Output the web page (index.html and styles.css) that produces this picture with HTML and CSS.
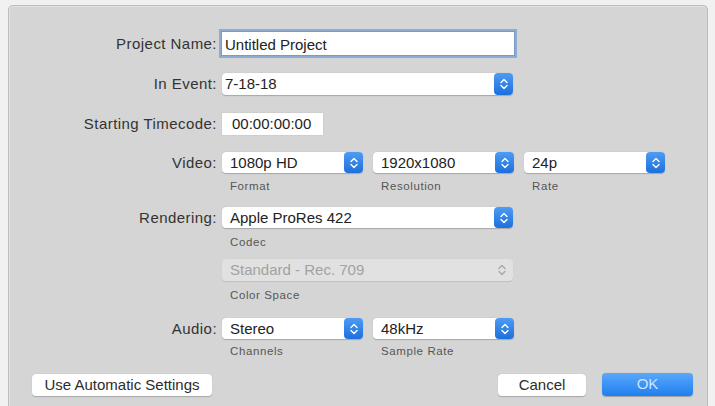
FILE: index.html
```html
<!DOCTYPE html>
<html>
<head>
<meta charset="utf-8">
<title>New Project</title>
<link rel="stylesheet" href="styles.css">
</head>
<body>
<div class="panel">
  <div class="row r-name">
    <div class="lbl">Project Name:</div>
    <div class="field field-name">Untitled Project</div>
  </div>

  <div class="row r-event">
    <div class="lbl">In Event:</div>
    <div class="popup w-full combo">
      <span class="val">7-18-18</span>
      <span class="step"><svg width="8" height="12" viewBox="0 0 8 12"><path d="M1 4.5L4 1.5L7 4.5M1 7.5L4 10.5L7 7.5" fill="none" stroke="#fff" stroke-width="1.4" stroke-linecap="round" stroke-linejoin="round"/></svg></span>
    </div>
  </div>

  <div class="row r-tc">
    <div class="lbl">Starting Timecode:</div>
    <div class="field field-tc">00:00:00:00</div>
  </div>

  <div class="row r-video">
    <div class="lbl">Video:</div>
    <div class="controls">
      <div class="col">
        <div class="popup w-third">
          <span class="val">1080p HD</span>
          <span class="step"><svg width="8" height="12" viewBox="0 0 8 12"><path d="M1 4.5L4 1.5L7 4.5M1 7.5L4 10.5L7 7.5" fill="none" stroke="#fff" stroke-width="1.4" stroke-linecap="round" stroke-linejoin="round"/></svg></span>
        </div>
        <div class="sub">Format</div>
      </div>
      <div class="col">
        <div class="popup w-third">
          <span class="val">1920x1080</span>
          <span class="step"><svg width="8" height="12" viewBox="0 0 8 12"><path d="M1 4.5L4 1.5L7 4.5M1 7.5L4 10.5L7 7.5" fill="none" stroke="#fff" stroke-width="1.4" stroke-linecap="round" stroke-linejoin="round"/></svg></span>
        </div>
        <div class="sub">Resolution</div>
      </div>
      <div class="col">
        <div class="popup w-third">
          <span class="val">24p</span>
          <span class="step"><svg width="8" height="12" viewBox="0 0 8 12"><path d="M1 4.5L4 1.5L7 4.5M1 7.5L4 10.5L7 7.5" fill="none" stroke="#fff" stroke-width="1.4" stroke-linecap="round" stroke-linejoin="round"/></svg></span>
        </div>
        <div class="sub">Rate</div>
      </div>
    </div>
  </div>

  <div class="row r-render">
    <div class="lbl">Rendering:</div>
    <div class="col">
      <div class="popup w-full">
        <span class="val">Apple ProRes 422</span>
        <span class="step"><svg width="8" height="12" viewBox="0 0 8 12"><path d="M1 4.5L4 1.5L7 4.5M1 7.5L4 10.5L7 7.5" fill="none" stroke="#fff" stroke-width="1.4" stroke-linecap="round" stroke-linejoin="round"/></svg></span>
      </div>
      <div class="sub">Codec</div>
    </div>
  </div>

  <div class="row r-color">
    <div class="lbl"></div>
    <div class="col">
      <div class="popup w-full disabled">
        <span class="val">Standard - Rec. 709</span>
        <span class="step"><svg width="8" height="12" viewBox="0 0 8 12"><path d="M1 4.5L4 1.5L7 4.5M1 7.5L4 10.5L7 7.5" fill="none" stroke="#a8a8a8" stroke-width="1.4" stroke-linecap="round" stroke-linejoin="round"/></svg></span>
      </div>
      <div class="sub">Color Space</div>
    </div>
  </div>

  <div class="row r-audio">
    <div class="lbl">Audio:</div>
    <div class="controls">
      <div class="col">
        <div class="popup w-third">
          <span class="val">Stereo</span>
          <span class="step"><svg width="8" height="12" viewBox="0 0 8 12"><path d="M1 4.5L4 1.5L7 4.5M1 7.5L4 10.5L7 7.5" fill="none" stroke="#fff" stroke-width="1.4" stroke-linecap="round" stroke-linejoin="round"/></svg></span>
        </div>
        <div class="sub">Channels</div>
      </div>
      <div class="col">
        <div class="popup w-third">
          <span class="val">48kHz</span>
          <span class="step"><svg width="8" height="12" viewBox="0 0 8 12"><path d="M1 4.5L4 1.5L7 4.5M1 7.5L4 10.5L7 7.5" fill="none" stroke="#fff" stroke-width="1.4" stroke-linecap="round" stroke-linejoin="round"/></svg></span>
        </div>
        <div class="sub">Sample Rate</div>
      </div>
    </div>
  </div>

  <div class="buttons">
    <div class="btn btn-auto">Use Automatic Settings</div>
    <div class="spacer"></div>
    <div class="btn btn-cancel">Cancel</div>
    <div class="btn btn-ok">OK</div>
  </div>
</div>
</body>
</html>
```

FILE: styles.css
```css
* { box-sizing: border-box; }

html, body {
  margin: 0;
  height: 100%;
  overflow: hidden;
}

body {
  background: #f1f1f1;
  font-family: "Liberation Sans", Arial, sans-serif;
  font-size: 15px;
  color: #2c2c2c;
  padding: 5px 7px 0 8px;
}

.panel {
  height: 410px;
  background: #d5d5d5;
  border: 1px solid #bcbcbc;
  border-bottom: none;
  border-radius: 5px 5px 0 0;
  box-shadow: inset 1px 1px 0 #e2e2e2;
  padding-top: 25px;
  display: flex;
  flex-direction: column;
}

.row {
  display: flex;
  align-items: flex-start;
}

.r-event { margin-top: 17px; }
.r-tc { margin-top: 18px; }
.r-video { margin-top: 17px; }
.r-render { margin-top: 14px; }
.r-color { margin-top: 10px; }
.r-audio { margin-top: 16px; }

.lbl {
  width: 208px;
  flex: none;
  text-align: right;
  line-height: 22px;
  margin-right: 5px;
  color: #333;
  letter-spacing: 0.45px;
}

.r-name .lbl { line-height: 25px; }
.r-video .lbl, .r-audio .lbl, .r-render .lbl { line-height: 21px; }

.field {
  background: #fff;
  color: #222;
  line-height: 22px;
  height: 22px;
  white-space: nowrap;
}

.field-name {
  width: 294px;
  height: 25px;
  line-height: 25px;
  margin-left: -1px;
  padding-left: 3px;
  border: 1px solid #7d9bc2;
  box-shadow: 0 0 0 2px #8eabd0;
}

.field-tc {
  width: 101px;
  padding-left: 10px;
  box-shadow: 0 0 0 0.5px #c8c8c8;
}

.controls {
  display: flex;
  gap: 10px;
}

.col {
  display: flex;
  flex-direction: column;
}

.popup {
  height: 21px;
  background: #fff;
  border-radius: 4px;
  box-shadow: 0 0.5px 1px rgba(0, 0, 0, 0.22);
  display: flex;
  align-items: stretch;
  justify-content: space-between;
  color: #222;
}

.r-event .popup, .r-color .popup { height: 22px; }

.popup .val {
  padding-left: 8px;
  line-height: 21px;
  white-space: nowrap;
}

.r-event .popup .val, .r-color .popup .val { line-height: 22px; }

.combo .val { padding-left: 3px; }

.w-full { width: 291px; }
.w-third { width: 141px; }

.step {
  width: 19px;
  flex: none;
  border-radius: 4px;
  background: linear-gradient(#4e9cf4, #1d6fdc);
  display: flex;
  align-items: center;
  justify-content: center;
}

.popup.disabled {
  background: #e1e1e1;
  box-shadow: 0 0.5px 1px rgba(0, 0, 0, 0.1);
  color: #a2a2a2;
}

.popup.disabled .step {
  background: none;
  margin-right: 2px;
}

.sub {
  margin-top: 6px;
  padding-left: 8px;
  font-size: 11.5px;
  letter-spacing: 0.6px;
  line-height: 14px;
  color: #555;
}

.r-render .sub { margin-top: 7px; }
.r-color .sub { margin-top: 7px; }
.r-audio .sub { margin-top: 5px; }

.buttons {
  margin-top: 15px;
  display: flex;
  align-items: center;
  padding: 0 14px 0 23px;
  gap: 16px;
}

.spacer { flex: 1; }

.btn {
  height: 22px;
  line-height: 22px;
  text-align: center;
  border-radius: 4px;
  font-size: 15px;
  white-space: nowrap;
}

.btn-auto {
  width: 180px;
  background: #fff;
  color: #2c2c2c;
  box-shadow: 0 0.5px 1px rgba(0, 0, 0, 0.22);
}

.btn-cancel {
  width: 88px;
  background: #fff;
  color: #2c2c2c;
  box-shadow: 0 0.5px 1px rgba(0, 0, 0, 0.22);
}

.btn-ok {
  width: 91px;
  height: 23px;
  background: linear-gradient(#5aa8fa, #1f7ff0);
  color: #cfe3fb;
  box-shadow: 0 0.5px 1px rgba(0, 0, 0, 0.25);
}
```
